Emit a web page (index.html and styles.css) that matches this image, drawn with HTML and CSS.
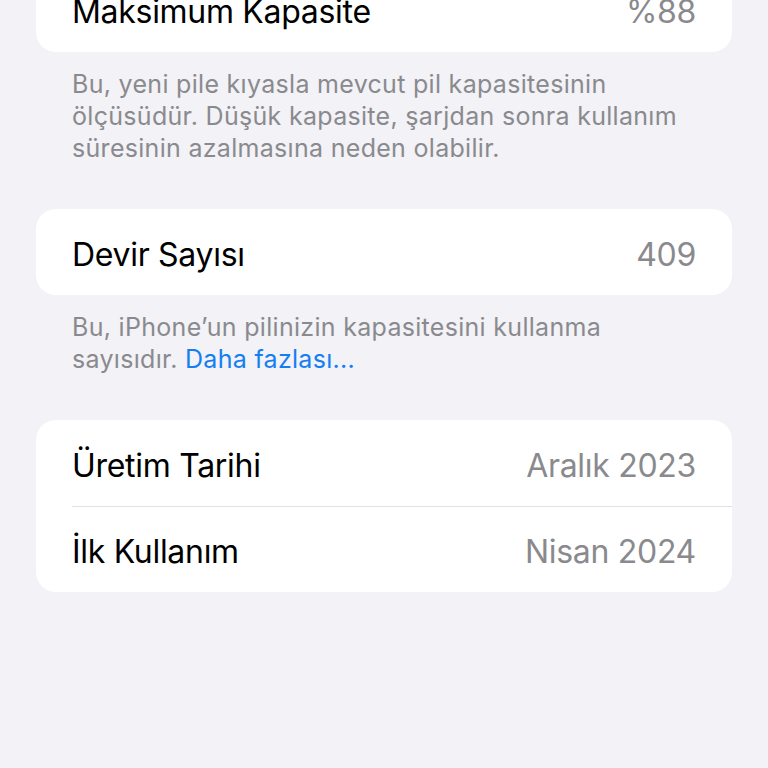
FILE: index.html
```html
<!DOCTYPE html>
<html lang="tr">
<head>
    <meta charset="UTF-8">
    <meta name="viewport" content="width=device-width, initial-scale=1.0">
    <title>Pil Durumu</title>
    <link rel="stylesheet" href="styles.css">
</head>
<body>
    <div class="page">
        <div class="group first">
            <div class="row">
                <span class="label">Maksimum Kapasite</span>
                <span class="value">%88</span>
            </div>
        </div>
        <p class="footer">Bu, yeni pile kıyasla mevcut pil kapasitesinin ölçüsüdür. Düşük kapasite, şarjdan sonra kullanım süresinin azalmasına neden olabilir.</p>

        <div class="group">
            <div class="row">
                <span class="label">Devir Sayısı</span>
                <span class="value">409</span>
            </div>
        </div>
        <p class="footer">Bu, iPhone’un pilinizin kapasitesini kullanma sayısıdır. <a href="#">Daha fazlası...</a></p>

        <div class="group">
            <div class="row">
                <span class="label">Üretim Tarihi</span>
                <span class="value">Aralık 2023</span>
            </div>
            <div class="row">
                <span class="label">İlk Kullanım</span>
                <span class="value">Nisan 2024</span>
            </div>
        </div>
    </div>
</body>
</html>
```

FILE: styles.css
```css
body {
    margin: 0;
    padding: 0;
    background: #f2f2f7;
    font-family: Inter, "Noto Sans", sans-serif;
    color: #000;
    overflow: hidden;
}
.page {
    padding: 0 36px;
}
.group {
    background: #fff;
    border-radius: 20px;
    overflow: hidden;
}
.group.first {
    margin-top: -34px;
}
.row {
    box-sizing: border-box;
    display: flex;
    justify-content: space-between;
    align-items: center;
    height: 86px;
    padding: 4px 36px 0;
    font-size: 32px;
    letter-spacing: -0.3px;
    position: relative;
}
.row + .row::before {
    content: "";
    position: absolute;
    top: 0;
    left: 36px;
    right: 0;
    border-top: 1px solid #e1e1e5;
}
.value {
    color: #8a8a8e;
}
.footer {
    margin: 16px 0 45px;
    padding: 0 36px;
    font-size: 25px;
    line-height: 32px;
    letter-spacing: 0.3px;
    color: #8a8a8e;
}
.footer a {
    color: #157ef0;
    text-decoration: none;
}
```
